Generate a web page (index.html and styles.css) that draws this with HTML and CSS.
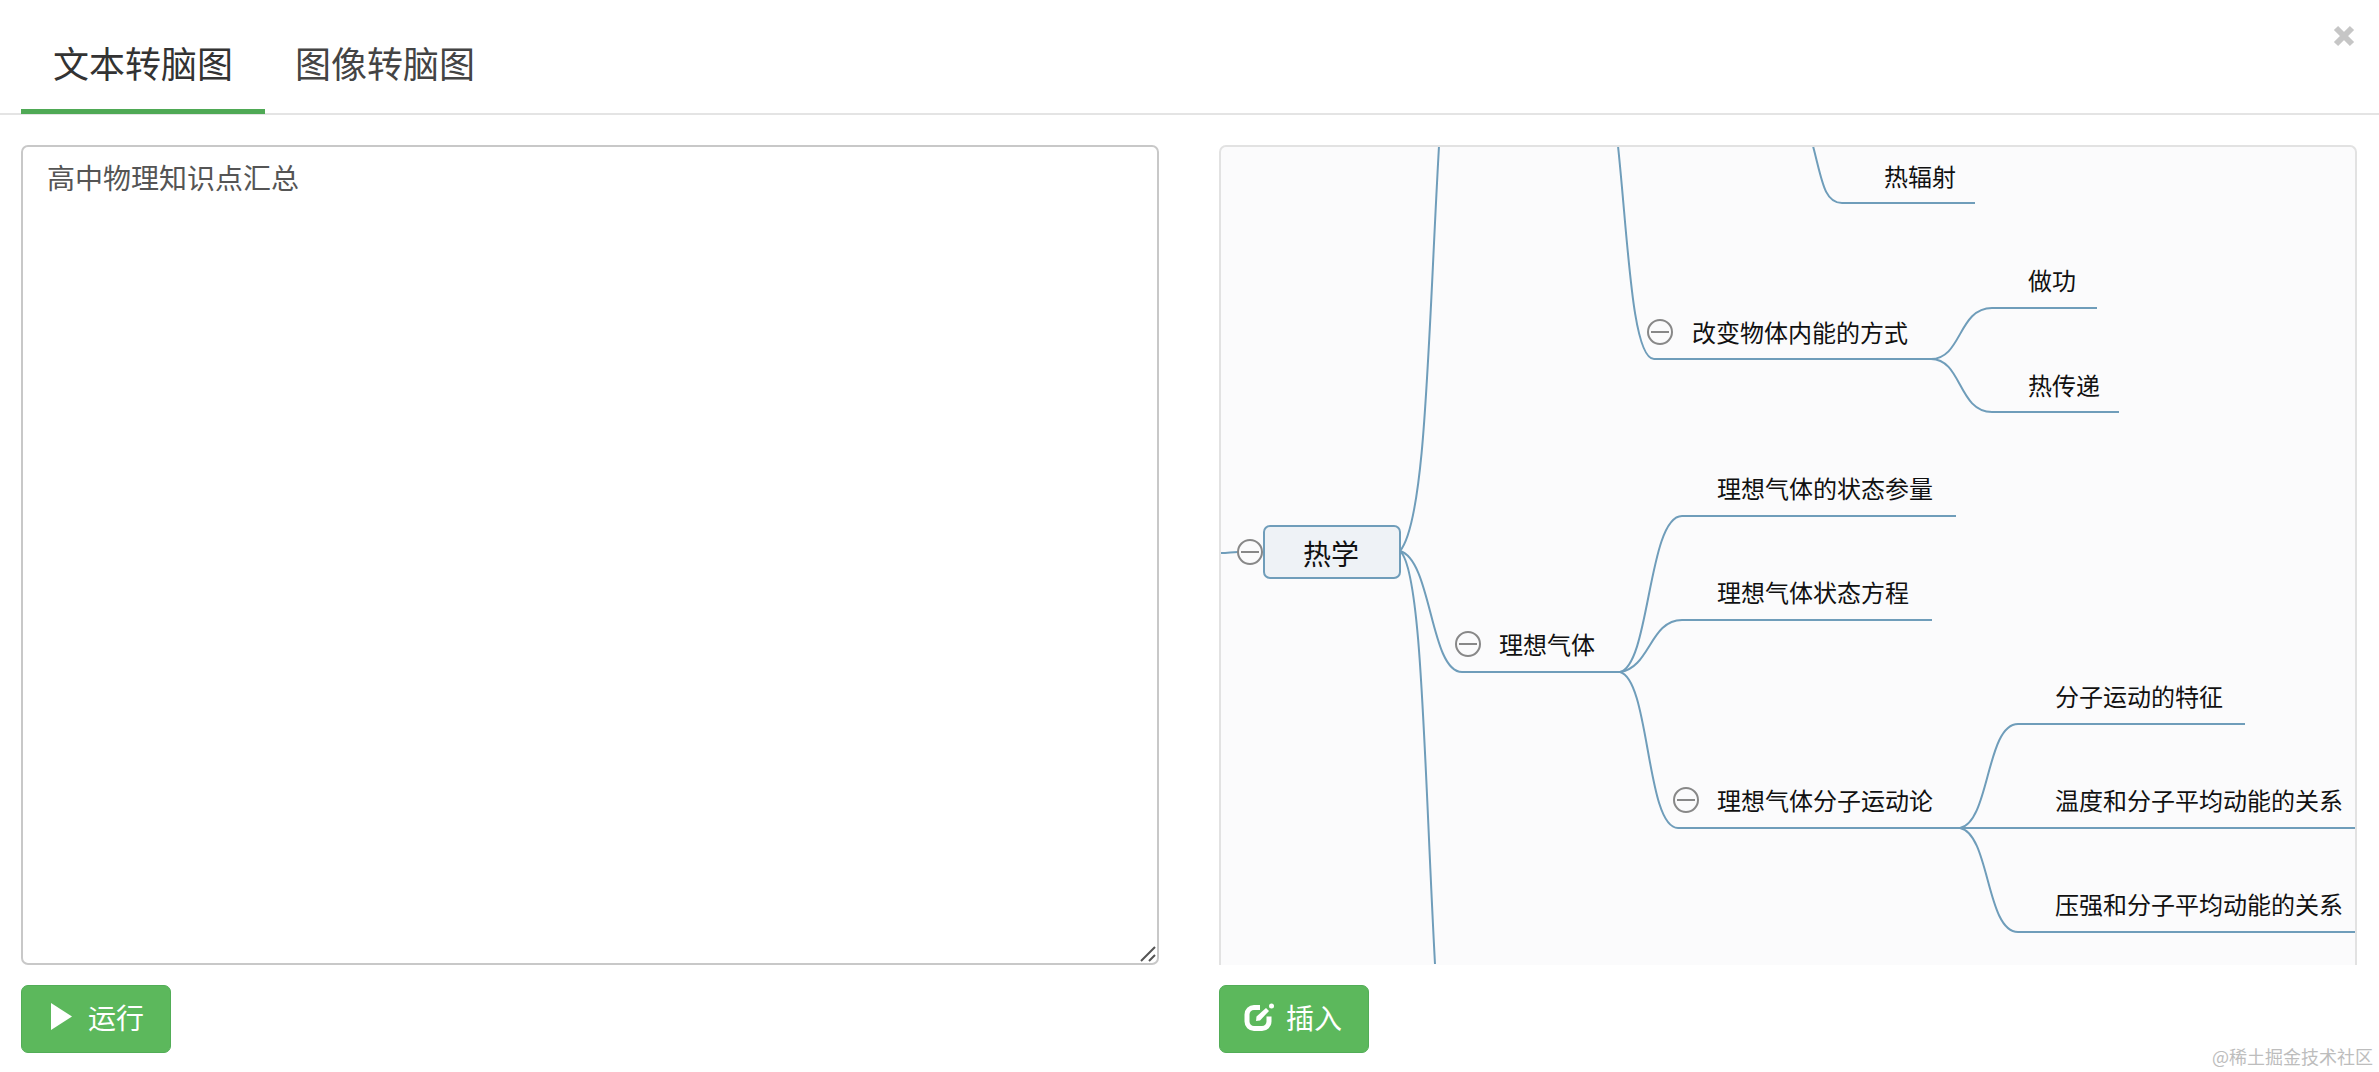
FILE: index.html
```html
<!DOCTYPE html>
<html lang="zh">
<head>
<meta charset="utf-8">
<title>文本转脑图</title>
<link rel="stylesheet" href="styles.css">
</head>
<body>
<div class="tabs">
	<a class="tab active">文本转脑图</a>
	<a class="tab">图像转脑图</a>
	<svg class="close" width="22" height="22" viewBox="0 0 22 22"><path d="M3 3L19 19M19 3L3 19"/></svg>
</div>
<div class="content">
	<div class="col">
		<div class="editor">
			<textarea class="input" spellcheck="false">高中物理知识点汇总</textarea>
			<svg class="grip" width="16" height="16" viewBox="0 0 16 16"><path d="M1 15L15 1M9 15L15 9"/></svg>
		</div>
		<button class="btn btn-run">
			<svg width="22" height="27" viewBox="0 0 22 27"><path d="M0 0L21 13.5L0 27Z" fill="#fff"/></svg>
			运行
		</button>
	</div>
	<div class="col">
		<div class="map">
			<svg class="tree" width="1134" height="817" viewBox="1221 147 1134 817">
				<!-- lines -->
				<path class="edge" d="M1221 553C1228 553 1232 552 1238 552"/>
				<path class="edge" d="M1400 551C1426 520 1428 340 1439 146"/>
				<path class="edge" d="M1400 551C1432 560 1430 672 1462 672H1620"/>
				<path class="edge" d="M1400 551C1422 570 1424 760 1435 964"/>
				<path class="edge" d="M1618 146C1628 240 1632 359 1654 359H1931"/>
				<path class="edge" d="M1931 359C1962 359 1958 308 1992 308H2097"/>
				<path class="edge" d="M1931 359C1962 359 1958 412 1992 412H2119"/>
				<path class="edge" d="M1813 146C1822 180 1824 203 1842 203H1975"/>
				<path class="edge" d="M1620 672C1650 665 1648 516 1682 516H1956"/>
				<path class="edge" d="M1620 672C1650 668 1650 620 1682 620H1932"/>
				<path class="edge" d="M1620 672C1650 680 1646 828 1678 828H1960"/>
				<path class="edge" d="M1960 828C1990 822 1986 724 2018 724H2245"/>
				<path class="edge" d="M1960 828H2356"/>
				<path class="edge" d="M1960 828C1990 834 1986 932 2018 932H2356"/>

				<rect class="root" x="1264" y="526" width="136" height="52" rx="6"/>
				<text class="label big" x="1331" y="553" text-anchor="middle">热学</text>

				<g class="fold"><circle cx="1250" cy="552" r="12"/><path d="M1241 552H1259"/></g>
				<g class="fold"><circle cx="1468" cy="644" r="12"/><path d="M1459 644H1477"/></g>
				<g class="fold"><circle cx="1660" cy="332" r="12"/><path d="M1651 332H1669"/></g>
				<g class="fold"><circle cx="1686" cy="800" r="12"/><path d="M1677 800H1695"/></g>

				<text class="label" x="1884" y="175">热辐射</text>
				<text class="label" x="2028" y="279">做功</text>
				<text class="label" x="1692" y="331">改变物体内能的方式</text>
				<text class="label" x="2028" y="384">热传递</text>
				<text class="label" x="1717" y="487">理想气体的状态参量</text>
				<text class="label" x="1717" y="591">理想气体状态方程</text>
				<text class="label" x="1499" y="643">理想气体</text>
				<text class="label" x="2055" y="695">分子运动的特征</text>
				<text class="label" x="1717" y="799">理想气体分子运动论</text>
				<text class="label" x="2055" y="799">温度和分子平均动能的关系</text>
				<text class="label" x="2055" y="903">压强和分子平均动能的关系</text>
			</svg>
		</div>
		<button class="btn btn-insert">
			<svg width="31" height="28" viewBox="0 0 31 28"><path class="pen" d="M16 4.500H10a7 7 0 0 0-7 7v7a7 7 0 0 0 7 7h8a7 7 0 0 0 7-7v-5"/><path d="M12 18L12.500 13.500L22 5L25 8L16 17.500Z" fill="#fff"/><circle cx="27.500" cy="3" r="2.500" fill="#fff"/></svg>
			插入
		</button>
	</div>
</div>
<div class="mark">@稀土掘金技术社区</div>
</body>
</html>
```

FILE: styles.css
```css
*{
	box-sizing:border-box;
}
html,body{
	margin:0;
	padding:0;
	background-color:#fff;
}
body{
	height:1072px;
	overflow:hidden;
	font-family:"Noto Sans CJK SC","Liberation Sans",sans-serif;
	color:#333;
}
.tabs{
	display:flex;
	height:115px;
	padding:0 24px 0 21px;
	border-bottom:2px solid #e4e4e4;
}
.tab{
	height:114px;
	padding:0 32px;
	font-size:36px;
	line-height:124px;
	color:#444;
	border-bottom:5px solid transparent;
}
.tab + .tab{
	margin-left:-2px;
}
.tab.active{
	color:#333;
	border-bottom-color:#4fa955;
}
.close{
	margin:25px 0 0 auto;
}
.close path{
	fill:none;
	stroke:#c6c6c6;
	stroke-width:6;
}
.content{
	display:grid;
	grid-template-columns:1138px 1138px;
	column-gap:60px;
	padding:30px 0 0 21px;
}
.col{
	display:flex;
	flex-direction:column;
	gap:20px;
}
.editor{
	position:relative;
	height:820px;
}
.input{
	display:block;
	width:100%;
	height:100%;
	padding:10px 24px;
	border:2px solid #c8c8c8;
	border-radius:7px;
	resize:none;
	outline:none;
	font-family:inherit;
	font-size:28px;
	line-height:40px;
	color:#555;
}
.grip{
	position:absolute;
	right:3px;
	bottom:3px;
}
.grip path{
	fill:none;
	stroke:#555;
	stroke-width:2;
}
.map{
	height:820px;
	overflow:hidden;
	background-color:#fbfbfc;
	border:2px solid #e2e2e2;
	border-bottom:0;
	border-radius:7px 7px 0 0;
}
.tree{
	display:block;
}
.edge{
	fill:none;
	stroke:#6f9dba;
	stroke-width:2;
}
.root{
	fill:#eef2f6;
	stroke:#6f9dba;
	stroke-width:2;
}
.fold circle{
	fill:#fbfbfc;
	stroke:#888;
	stroke-width:2;
}
.fold path{
	stroke:#888;
	stroke-width:2;
}
.label{
	font-size:24px;
	fill:#111;
	dominant-baseline:central;
}
.label.big{
	font-size:28px;
}
.btn{
	display:flex;
	align-items:center;
	width:150px;
	height:68px;
	padding:0 0 5px;
	background-color:#5cb85c;
	border:1px solid #52ad57;
	border-radius:7px;
	font-family:inherit;
	font-size:28px;
	color:#fff;
}
.btn-run{
	gap:15px;
	padding-left:29px;
}
.btn-insert{
	gap:11px;
	padding-left:24px;
}
.pen{
	fill:none;
	stroke:#fff;
	stroke-width:5;
}
.mark{
	position:absolute;
	right:6px;
	bottom:4px;
	font-size:18px;
	line-height:24px;
	color:#bdbdbd;
}
```
